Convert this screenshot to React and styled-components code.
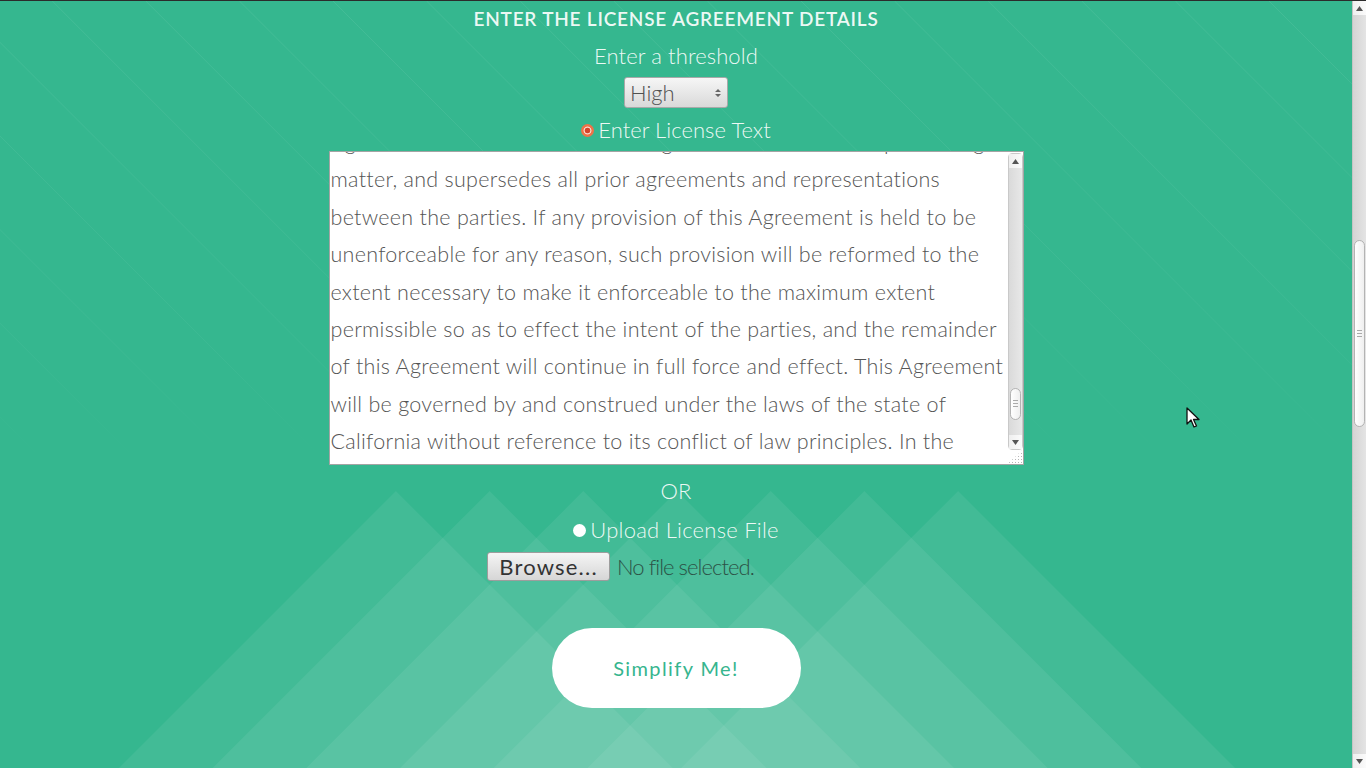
import React from "react";
import styled, { createGlobalStyle } from "styled-components";

const GlobalStyle = createGlobalStyle`
  html, body {
    margin: 0;
    padding: 0;
    height: 100%;
    overflow: hidden;
  }
  body {
    font-family: "Lato", "Liberation Sans", sans-serif;
    background: #35b78f;
  }
`;

const Shell = styled.div`
  display: flex;
  width: 100vw;
  height: 100vh;
  border-top: 1px solid #2b2b2b;
  box-sizing: border-box;
`;

const Main = styled.main`
  position: relative;
  flex: 1;
  overflow: hidden;
  background: #35b78f;
`;

const Backdrop = styled.svg`
  position: absolute;
  left: 0;
  top: 0;
  pointer-events: none;
`;

const Content = styled.div`
  position: relative;
  z-index: 1;
  display: flex;
  flex-direction: column;
  align-items: center;
  padding-top: 5px;
  color: rgba(255, 255, 255, 0.92);
`;

const Heading = styled.h2`
  margin: 0;
  font-size: 19px;
  line-height: 26px;
  font-weight: 600;
  letter-spacing: 0.78px;
  text-transform: uppercase;
`;

const Label = styled.div`
  margin-top: ${(p) => p.$gap}px;
  font-size: 22px;
  line-height: 28px;
  font-weight: 300;
  letter-spacing: 0.1px;
`;

const Select = styled.div`
  margin-top: 7px;
  width: 104px;
  height: 31px;
  box-sizing: border-box;
  display: flex;
  align-items: center;
  justify-content: space-between;
  padding: 0 6px 0 5px;
  border: 1px solid #a9a9a9;
  border-radius: 3px;
  background: linear-gradient(#f6f6f6, #d9d9d9);
  color: #505050;
  font-size: 22px;
  font-weight: 300;
`;

const RadioRow = styled.label`
  margin-top: ${(p) => p.$gap}px;
  display: flex;
  align-items: center;
  gap: 4px;
  font-size: 22px;
  line-height: 28px;
  font-weight: 300;
  letter-spacing: ${(p) => p.$spacing}px;
`;

const RadioDot = styled.span`
  flex-shrink: 0;
  width: 13px;
  height: 13px;
  border-radius: 50%;
  box-sizing: border-box;
  background: ${(p) =>
    p.$checked
      ? "radial-gradient(circle closest-side, #d6432a 0 2.6px, #f9d3c2 3.1px 3.7px, #ee7248 4.3px)"
      : "#ffffff"};
`;

const TextBox = styled.div`
  margin-top: 7px;
  width: 695px;
  height: 314px;
  box-sizing: border-box;
  display: flex;
  background: #fff;
  border: 1px solid #a4a4a4;
  overflow: hidden;
`;

const TextBody = styled.div`
  flex: 1;
  padding-left: 1px;
  overflow: hidden;
  color: #555;
  font-size: 21.5px;
  font-weight: 300;
  line-height: 37.4px;
  letter-spacing: 0.28px;
`;

const Lines = styled.div`
  margin-top: -28px;
`;

const Line = styled.div`
  white-space: nowrap;
`;

const ScrollCol = styled.div`
  width: 15px;
  display: flex;
  flex-direction: column;
  background: #fff;
`;

const Track = styled.div`
  flex: 1;
  display: flex;
  flex-direction: column;
  border: 1px solid #c9c9c9;
  border-radius: 4px;
  background: linear-gradient(90deg, #dadada, #e8e8e8);
  margin: 1px 0 0 0;
  box-sizing: border-box;
`;

const Arrow = styled.div`
  height: 14px;
  display: flex;
  align-items: center;
  justify-content: center;
  background: linear-gradient(90deg, #efefef, #fbfbfb);
`;

const Gap = styled.div`
  flex: ${(p) => p.$grow};
`;

const Thumb = styled.div`
  height: ${(p) => p.$h}px;
  margin: 0 1px;
  border: 1px solid #b3b3b3;
  border-radius: 6px;
  background: linear-gradient(90deg, #ffffff, #efefef);
  display: flex;
  align-items: center;
  justify-content: center;
`;

const Grip = styled.div`
  width: 5px;
  height: 5px;
  border-top: 1px solid #aaa;
  border-bottom: 1px solid #aaa;
  position: relative;
  &::after {
    content: "";
    position: absolute;
    left: 0;
    right: 0;
    top: 2px;
    border-top: 1px solid #aaa;
  }
`;

const Resizer = styled.div`
  height: 14px;
  background-image: radial-gradient(circle, #b5b5b5 0.8px, transparent 1px);
  background-size: 3px 3px;
  background-position: right bottom;
  clip-path: polygon(100% 0, 100% 100%, 0 100%);
`;

const FileRow = styled.div`
  margin-top: 8px;
  width: 378px;
  display: flex;
  align-items: center;
  gap: 7px;
`;

const BrowseButton = styled.button`
  width: 123px;
  height: 29px;
  padding: 0;
  border: 1px solid #9d9d9d;
  border-radius: 3px;
  background: linear-gradient(#f5f5f5, #d6d6d6);
  color: #333;
  font-family: "Lato", "Liberation Sans", sans-serif;
  font-size: 22px;
  font-weight: 400;
  letter-spacing: 1.2px;
`;

const FileName = styled.span`
  color: #2c5246;
  font-size: 22px;
  font-weight: 300;
  letter-spacing: -0.95px;
`;

const SimplifyButton = styled.button`
  margin-top: 47px;
  width: 249px;
  height: 80px;
  border: none;
  border-radius: 40px;
  background: #fff;
  color: #36b58e;
  font-family: "Lato", "Liberation Sans", sans-serif;
  font-size: 20px;
  font-weight: 400;
  letter-spacing: 1.4px;
`;

const PageScroll = styled.div`
  width: 14px;
  display: flex;
  flex-direction: column;
  background: linear-gradient(90deg, #d4d4d4, #e4e4e4);
  border-left: 1px solid #c4c4c4;
  box-sizing: border-box;
`;

const Cursor = styled.svg`
  position: absolute;
  left: 1186px;
  top: 406px;
  z-index: 2;
`;

const lines = [
  "Agreement constitutes the entire agreement between the parties regarding its subject",
  "matter, and supersedes all prior agreements and representations",
  "between the parties. If any provision of this Agreement is held to be",
  "unenforceable for any reason, such provision will be reformed to the",
  "extent necessary to make it enforceable to the maximum extent",
  "permissible so as to effect the intent of the parties, and the remainder",
  "of this Agreement will continue in full force and effect. This Agreement",
  "will be governed by and construed under the laws of the state of",
  "California without reference to its conflict of law principles. In the",
  "event of any dispute arising out of this Agreement, the parties agree",
];

function ArrowIcon({ up }) {
  return (
    <svg width="7" height="5" viewBox="0 0 7 5">
      <path d={up ? "M0 5 L3.5 0 L7 5 Z" : "M0 0 L3.5 5 L7 0 Z"} fill="#555" />
    </svg>
  );
}

function Background() {
  const peaks = [-3, -2, -1, 0, 1, 2, 3].map((k) => 677 + k * 93.7);
  const diag = [];
  for (let x = -700; x < 1400; x += 93.6) diag.push(x + 97);
  return (
    <Backdrop width="1352" height="768">
      <defs>
        <linearGradient id="fade" x1="0" y1="0" x2="0" y2="1">
          <stop offset="0" stopColor="#fff" stopOpacity="0.07" />
          <stop offset="0.45" stopColor="#fff" stopOpacity="0.035" />
          <stop offset="0.6" stopColor="#fff" stopOpacity="0" />
        </linearGradient>
      </defs>
      {diag.map((x, i) => (
        <line key={i} x1={x} y1="0" x2={x + 768} y2="768" stroke="url(#fade)" strokeWidth="1" />
      ))}
      {peaks.map((px, i) => (
        <polygon key={i} points={`${px},490 ${px + 320},810 ${px - 320},810`} fill="#fff" fillOpacity="0.065" />
      ))}
    </Backdrop>
  );
}

export default function App() {
  return (
    <>
      <GlobalStyle />
      <Shell>
        <Main>
          <Background />
          <Content>
            <Heading>Enter the License Agreement Details</Heading>
            <Label $gap={10}>Enter a threshold</Label>
            <Select>
              <span>High</span>
              <svg width="6" height="10" viewBox="0 0 6 10">
                <path d="M0 4 L3 1 L6 4 Z M0 6 L3 9 L6 6 Z" fill="#666" />
              </svg>
            </Select>
            <RadioRow $gap={8} $spacing={0.05}>
              <RadioDot $checked />
              Enter License Text
            </RadioRow>
            <TextBox>
              <TextBody>
                <Lines>
                  {lines.map((l, i) => (
                    <Line key={i}>{l}</Line>
                  ))}
                </Lines>
              </TextBody>
              <ScrollCol>
                <Track>
                  <Arrow>
                    <ArrowIcon up />
                  </Arrow>
                  <Gap $grow={1} />
                  <Thumb $h={30}>
                    <Grip />
                  </Thumb>
                  <Gap $grow={0.07} />
                  <Arrow>
                    <ArrowIcon />
                  </Arrow>
                </Track>
                <Resizer />
              </ScrollCol>
            </TextBox>
            <Label $gap={12}>OR</Label>
            <RadioRow $gap={11} $spacing={0.25}>
              <RadioDot />
              Upload License File
            </RadioRow>
            <FileRow>
              <BrowseButton>Browse...</BrowseButton>
              <FileName>No file selected.</FileName>
            </FileRow>
            <SimplifyButton>Simplify Me!</SimplifyButton>
          </Content>
          <Cursor width="14" height="22" viewBox="0 0 14 22">
            <path d="M1 1 L1 17 L5 13 L8 20 L10.5 19 L7.5 12.5 L13 12.5 Z" fill="#fff" stroke="#111" strokeWidth="1.3" strokeLinejoin="round" />
          </Cursor>
        </Main>
        <PageScroll>
          <Arrow>
            <ArrowIcon up />
          </Arrow>
          <Gap $grow={226} />
          <Thumb $h={185}>
            <Grip />
          </Thumb>
          <Gap $grow={329} />
          <Arrow>
            <ArrowIcon />
          </Arrow>
        </PageScroll>
      </Shell>
    </>
  );
}
